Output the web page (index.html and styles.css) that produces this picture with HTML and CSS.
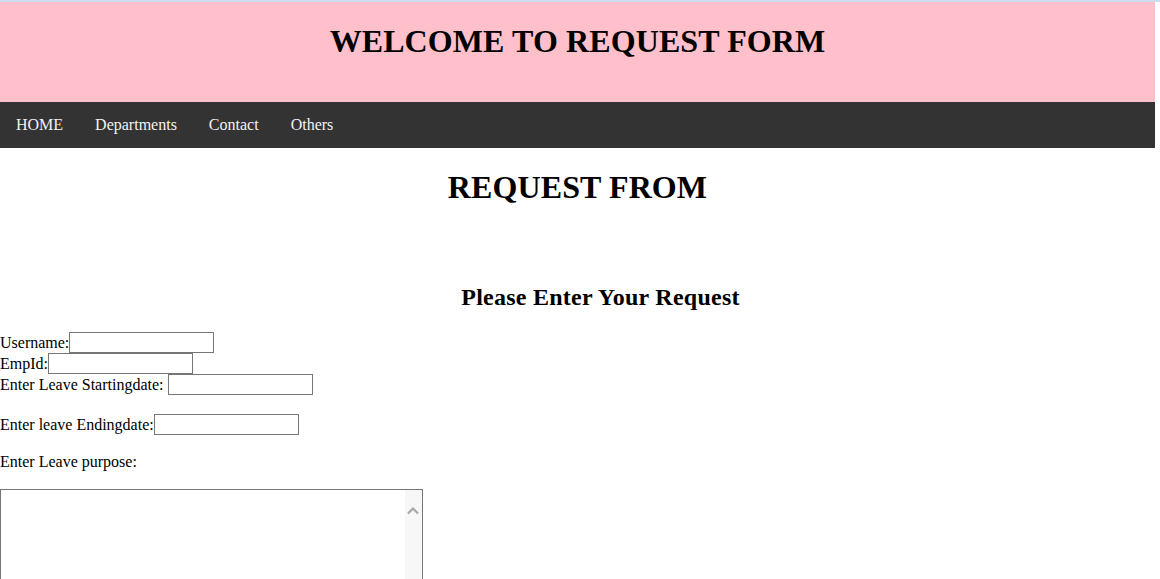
FILE: index.html
```html
<!DOCTYPE html>
<html>
<head>
<meta charset="utf-8">
<title>Request Form</title>
<link rel="stylesheet" href="styles.css">
</head>
<body>
<div class="topstrip"></div>
<div class="page">
  <header class="banner">
    <h1 class="banner-title">WELCOME TO REQUEST FORM</h1>
  </header>
  <nav class="topnav">
    <a href="#">HOME</a>
    <a href="#">Departments</a>
    <a href="#">Contact</a>
    <a href="#">Others</a>
  </nav>
  <h1 class="title">REQUEST FROM</h1>
  <h2 class="subtitle">Please Enter Your Request</h2>
  <form class="form">
    <div class="row">Username:<input type="text" class="field"></div>
    <div class="row">EmpId:<input type="text" class="field"></div>
    <div class="row">Enter Leave Startingdate:<input type="text" class="field spaced"></div>
    <div class="row row-gap">Enter leave Endingdate:<input type="text" class="field"></div>
    <div class="label-line">Enter Leave purpose:</div>
    <div class="purpose-wrap">
      <textarea class="purpose"></textarea>
      <div class="scrollbar" aria-hidden="true">
        <svg class="scroll-arrow" width="12" height="9" viewBox="0 0 12 9"><path d="M1 7.5 L6 2.5 L11 7.5" fill="none" stroke="#a8a8a8" stroke-width="2.2"/></svg>
      </div>
    </div>
  </form>
</div>
</body>
</html>
```

FILE: styles.css
```css
html, body {
  margin: 0;
  padding: 0;
  background: #ffffff;
  font-family: "Liberation Serif", "Times New Roman", serif;
  font-size: 16px;
  color: #000;
  overflow: hidden;
}

.topstrip {
  height: 2px;
  background: #d0ddf1;
}

.page {
  width: 1155px;
}

.banner {
  height: 100px;
  background: #ffc0cb;
  overflow: hidden;
}

.banner-title {
  margin: 21px 0 0;
  font-size: 32px;
  font-weight: bold;
  text-align: center;
  letter-spacing: 0.1px;
}

.topnav {
  display: flex;
  height: 46px;
  background: #333333;
}

.topnav a {
  padding: 14px 16px;
  color: #f2f2f2;
  text-decoration: none;
  font-size: 16px;
  line-height: 18px;
}

.title {
  margin: 21px 0 0;
  font-size: 32px;
  font-weight: bold;
  text-align: center;
  letter-spacing: 0.1px;
}

.subtitle {
  margin: 78px 0 21px;
  padding-left: 46px;
  font-size: 24px;
  font-weight: bold;
  text-align: center;
  letter-spacing: 0.25px;
}

.form {
  margin: 0;
}

.row {
  display: flex;
  align-items: center;
  height: 21px;
}

.row-gap {
  margin-top: 19px;
}

.field {
  box-sizing: border-box;
  width: 145px;
  height: 21px;
  margin: 0;
  padding: 1px 2px;
  border: 1px solid #767676;
  background: #fff;
  font-size: 13px;
}

.spaced {
  margin-left: 5px;
}

.label-line {
  margin-top: 18px;
  height: 18px;
  line-height: 18px;
}

.purpose-wrap {
  position: relative;
  width: 423px;
  height: 160px;
  margin-top: 18px;
}

.purpose {
  display: block;
  box-sizing: border-box;
  margin: 0;
  width: 423px;
  height: 160px;
  border: 1px solid #767676;
  resize: none;
}

.scrollbar {
  position: absolute;
  top: 1px;
  right: 1px;
  bottom: 1px;
  width: 17px;
  background: #f7f7f7;
}

.scroll-arrow {
  display: block;
  margin: 16px 0 0 2px;
}
```
